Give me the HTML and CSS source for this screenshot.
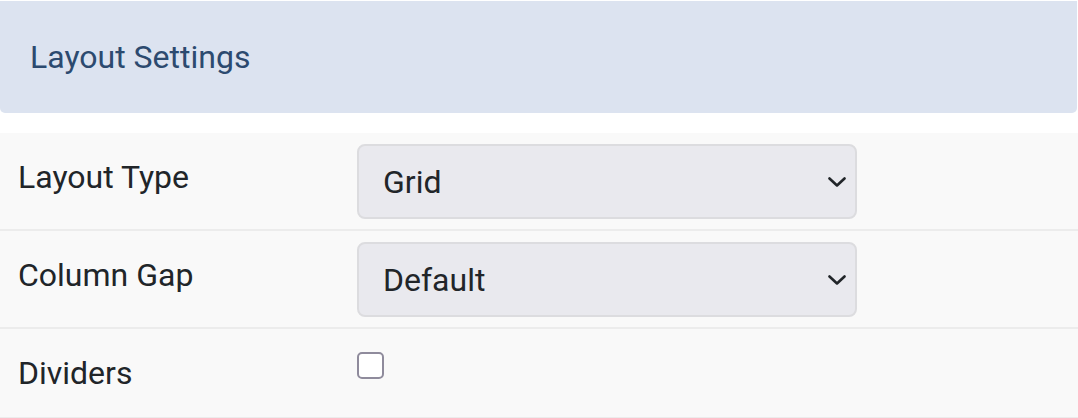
FILE: index.html
```html
<!DOCTYPE html>
<html lang="en">
<head>
<meta charset="utf-8">
<title>Layout Settings</title>
<link rel="stylesheet" href="styles.css">
</head>
<body>
  <header class="panel-header">
    <h2 class="panel-title">Layout Settings</h2>
  </header>
  <section class="settings">
    <div class="setting-row">
      <label class="setting-label" for="layout-type">Layout Type</label>
      <div class="select-wrap">
        <select id="layout-type" class="form-select">
          <option>Grid</option>
          <option>List</option>
        </select>
        <svg class="chevron" width="18" height="10" viewBox="0 0 18 10" aria-hidden="true">
          <polyline points="1.5,1.5 9,8.5 16.5,1.5" fill="none" stroke="#212529" stroke-width="2.6" stroke-linecap="round" stroke-linejoin="round"/>
        </svg>
      </div>
    </div>
    <div class="setting-row">
      <label class="setting-label" for="column-gap">Column Gap</label>
      <div class="select-wrap">
        <select id="column-gap" class="form-select">
          <option>Default</option>
          <option>Small</option>
          <option>Large</option>
        </select>
        <svg class="chevron" width="18" height="10" viewBox="0 0 18 10" aria-hidden="true">
          <polyline points="1.5,1.5 9,8.5 16.5,1.5" fill="none" stroke="#212529" stroke-width="2.6" stroke-linecap="round" stroke-linejoin="round"/>
        </svg>
      </div>
    </div>
    <div class="setting-row">
      <label class="setting-label" for="dividers">Dividers</label>
      <div class="check-wrap">
        <input id="dividers" type="checkbox" class="form-check">
      </div>
    </div>
  </section>
</body>
</html>
```

FILE: styles.css
```css
html, body {
  margin: 0;
  padding: 0;
  background: #ffffff;
}

body {
  font-family: Roboto, "Liberation Sans", Arial, sans-serif;
  color: #212529;
}

.panel-header {
  margin-top: 1px;
  margin-right: 1px;
  background: #dce3f0;
  padding: 32px 30px;
  border-radius: 0 0 5px 5px;
}

.panel-title {
  margin: 0;
  font-size: 32px;
  font-weight: 400;
  line-height: 48px;
  color: #2c4a6f;
}

.settings {
  margin-top: 20px;
}

.setting-row {
  display: grid;
  grid-template-columns: 357px 500px;
  align-items: start;
  background: #f9f9f9;
  border-bottom: 2px solid #ececec;
  padding: 11px 0 10px;
}

.setting-label {
  padding: 9px 0 10px 18px;
  font-size: 32px;
  line-height: 48px;
  color: #212529;
}

.select-wrap {
  position: relative;
}

.form-select {
  display: block;
  width: 500px;
  height: 75px;
  margin: 0;
  padding: 0 60px 0 24px;
  -webkit-appearance: none;
  appearance: none;
  background: #e9e9ee;
  border: 2px solid #dcdcdf;
  border-radius: 8px;
  font-family: Roboto, "Liberation Sans", Arial, sans-serif;
  font-size: 32px;
  color: #212529;
  outline: none;
}

.chevron {
  position: absolute;
  right: 11px;
  top: 33px;
  pointer-events: none;
}

.check-wrap {
  padding-top: 12px;
}

.form-check {
  display: block;
  width: 27px;
  height: 27px;
  margin: 0;
  -webkit-appearance: none;
  appearance: none;
  background: #ffffff;
  border: 2px solid #8f8b9c;
  border-radius: 5px;
}
```
